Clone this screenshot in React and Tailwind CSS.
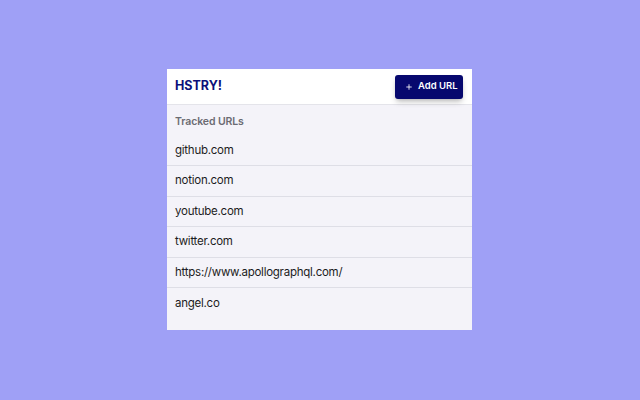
import { Plus } from 'lucide-react'

const urls = [
  'github.com',
  'notion.com',
  'youtube.com',
  'twitter.com',
  'https://www.apollographql.com/',
  'angel.co',
]

export default function App() {
  return (
    <div className="w-[640px] h-[400px] bg-[#9fa0f6] pt-[69px] pl-[167px] font-['Inter',sans-serif]">
      <div className="w-[305px] h-[261px] bg-[#f4f3f9] flex flex-col">
        <div className="h-[36px] bg-white border-b border-[#e4e4ea] flex items-center justify-between pl-2 pr-[9px]">
          <h1 className="text-[12.5px] font-bold text-[#0b0f7a]">HSTRY!</h1>
          <button className="flex items-center gap-[5px] h-[24px] w-[68px] pl-[10px] rounded-[3px] bg-[#07086e] text-white text-[9.5px] font-semibold shadow-md shadow-black/20">
            <Plus className="w-[8px] h-[8px]" strokeWidth={2.5} />
            Add URL
          </button>
        </div>
        <div className="px-2 pt-[9px] pb-[6px] text-[10.5px] font-semibold tracking-[-0.1px] text-[#6b6b72]">Tracked URLs</div>
        <ul>
          {urls.map((u, i) => (
            <li
              key={u}
              className={`h-[30.5px] flex items-center px-2 text-[11.5px] tracking-[-0.25px] text-[#1c1c22] ${i < urls.length - 1 ? 'border-b border-[#dedee6]' : ''}`}
            >
              {u}
            </li>
          ))}
        </ul>
      </div>
    </div>
  )
}
